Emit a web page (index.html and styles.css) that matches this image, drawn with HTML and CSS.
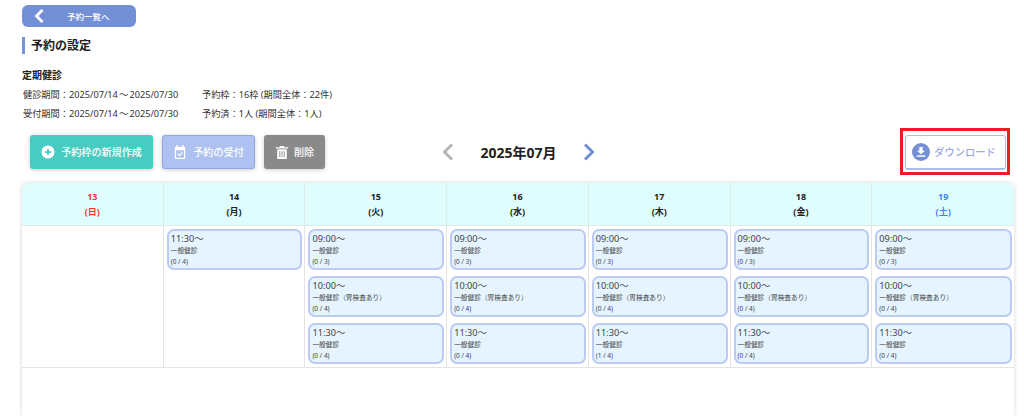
FILE: index.html
```html
<!DOCTYPE html>
<html lang="ja">
<head>
<meta charset="utf-8">
<title>予約の設定</title>
<link rel="stylesheet" href="styles.css">
</head>
<body>
<main class="page">
  <a class="back"><svg class="back-icon" viewBox="0 0 12 16"><path d="M9.500 2 3.500 8l6 6" fill="none" stroke="#fff" stroke-width="2.800"/></svg><span>予約一覧へ</span></a>
  <h1 class="title">予約の設定</h1>
  <section class="info">
    <h2 class="info-name">定期健診</h2>
    <div class="info-row"><span class="info-a">健診期間：2025/07/14 ～ 2025/07/30</span><span>予約枠：16枠 (期間全体：22件)</span></div>
    <div class="info-row"><span class="info-a">受付期間：2025/07/14 ～ 2025/07/30</span><span>予約済：1人 (期間全体：1人)</span></div>
  </section>
  <div class="toolbar">
    <div class="actions">
      <button class="btn btn-new"><svg viewBox="0 0 16 16" class="ico"><circle cx="8" cy="8" r="7.500" fill="#fff"/><path d="M8 4.500v7M4.500 8h7" stroke="#48cbc1" stroke-width="2"/></svg>予約枠の新規作成</button>
      <button class="btn btn-accept"><svg viewBox="0 0 16 16" class="ico"><path d="M4.500 0v3M11.500 0v3" stroke="#fff" stroke-width="1.600"/><rect x="2" y="2" width="12" height="14" rx="1.500" fill="#fff"/><rect x="3.500" y="6" width="9" height="8.500" fill="#aec1f0"/><path d="m5.500 10 2 2 3.500-3.500" fill="none" stroke="#fff" stroke-width="1.300"/></svg>予約の受付</button>
      <button class="btn btn-del"><svg viewBox="0 0 16 16" class="ico"><path d="M1 2.500h14V4H1zM5.500 1h5v1.500h-5z" fill="#fff"/><path d="M2.500 5h11v11h-11z" fill="#fff"/><path d="M5.500 7v7M8 7v7M10.500 7v7" stroke="#8a8a8a" stroke-width="1"/></svg>削除</button>
    </div>
    <div class="month">
      <svg class="chev" viewBox="0 0 12 18"><path d="M10 1.500 2.500 9l7.500 7.500" fill="none" stroke="#b5b5b5" stroke-width="3"/></svg>
      <span class="month-label">2025年07月</span>
      <svg class="chev" viewBox="0 0 12 18"><path d="M2 1.500 9.500 9 2 16.500" fill="none" stroke="#7390d6" stroke-width="3"/></svg>
    </div>
    <div class="dl-wrap">
      <button class="dl"><svg viewBox="0 0 18 18" class="dl-ico"><circle cx="9" cy="9" r="9" fill="#7390d6"/><path d="M7.300 4h3.400v3.800h2.300L9 11.200 5 7.800h2.300z" fill="#fff"/><path d="M4.800 12.300h8.400v1.500H4.800z" fill="#fff"/></svg>ダウンロード</button>
      <div class="highlight"></div>
    </div>
  </div>
  <section class="calendar">
    <div class="cal-grid">
      <div class="head sun">13<br>(日)</div>
      <div class="head">14<br>(月)</div>
      <div class="head">15<br>(火)</div>
      <div class="head">16<br>(水)</div>
      <div class="head">17<br>(木)</div>
      <div class="head">18<br>(金)</div>
      <div class="head sat">19<br>(土)</div>

      <div class="day"></div>
      <div class="day">
        <div class="slot"><b>11:30～</b><span>一般健診</span><i>(0 / 4)</i></div>
      </div>
      <div class="day">
        <div class="slot"><b>09:00～</b><span>一般健診</span><i>(0 / 3)</i></div>
        <div class="slot"><b>10:00～</b><span>一般健診（胃検査あり）</span><i>(0 / 4)</i></div>
        <div class="slot"><b>11:30～</b><span>一般健診</span><i>(0 / 4)</i></div>
      </div>
      <div class="day">
        <div class="slot"><b>09:00～</b><span>一般健診</span><i>(0 / 3)</i></div>
        <div class="slot"><b>10:00～</b><span>一般健診（胃検査あり）</span><i>(0 / 4)</i></div>
        <div class="slot"><b>11:30～</b><span>一般健診</span><i>(0 / 4)</i></div>
      </div>
      <div class="day">
        <div class="slot"><b>09:00～</b><span>一般健診</span><i>(0 / 3)</i></div>
        <div class="slot"><b>10:00～</b><span>一般健診（胃検査あり）</span><i>(0 / 4)</i></div>
        <div class="slot"><b>11:30～</b><span>一般健診</span><i>(1 / 4)</i></div>
      </div>
      <div class="day">
        <div class="slot"><b>09:00～</b><span>一般健診</span><i>(0 / 3)</i></div>
        <div class="slot"><b>10:00～</b><span>一般健診（胃検査あり）</span><i>(0 / 4)</i></div>
        <div class="slot"><b>11:30～</b><span>一般健診</span><i>(0 / 4)</i></div>
      </div>
      <div class="day">
        <div class="slot"><b>09:00～</b><span>一般健診</span><i>(0 / 3)</i></div>
        <div class="slot"><b>10:00～</b><span>一般健診（胃検査あり）</span><i>(0 / 4)</i></div>
        <div class="slot"><b>11:30～</b><span>一般健診</span><i>(0 / 4)</i></div>
      </div>
    </div>
  </section>
</main>
</body>
</html>
```
FILE: styles.css
```css
* { box-sizing: border-box; }
html, body { margin: 0; height: 416px; overflow: hidden; background: #fff; }
body { font-family: "Noto Sans", "Noto Sans CJK JP", sans-serif; color: #222; }
.page { display: flex; flex-direction: column; align-items: flex-start; padding: 5px 10px 0 22px; height: 416px; }

.back { width: 114px; height: 22px; border-radius: 6px; background: #7390d6; color: #fff; display: flex; align-items: center; font-size: 8.500px; font-weight: 500; padding-left: 11px; }
.back-icon { width: 12px; height: 16px; }
.back span { margin-left: 22px; }

.title { margin: 10px 0 0; height: 17px; border-left: 3px solid #7a90d8; padding-left: 6px; font-size: 12px; line-height: 17px; font-weight: 700; color: #222; }

.info { margin-top: 14px; }
.info-name { margin: 0 0 7px; font-size: 10px; line-height: 14px; font-weight: 700; }
.info-row { display: flex; font-size: 9.200px; line-height: 12px; height: 19px; padding-left: 1px; color: #333; }
.info-a { width: 179px; word-spacing: -1.200px; }

.toolbar { display: flex; align-items: flex-start; width: 992px; margin-top: 8px; padding-left: 8px; }
.actions { display: flex; gap: 9px; width: 412px; }
.btn { height: 34px; border: 0; border-radius: 3px; color: #fff; font: 500 10.100px/1 "Noto Sans", "Noto Sans CJK JP", sans-serif; display: flex; align-items: center; justify-content: center; gap: 6px; padding: 0; box-shadow: 0 1px 4px rgba(0,0,0,.2); }
.ico { width: 14px; height: 14px; flex: none; }
.btn-new { width: 123px; background: #48cbc1; }
.btn-accept { width: 93px; background: #aec1f0; border: 1px solid #8ea6e4; }
.btn-del { width: 61px; background: #8a8a8a; gap: 5px; }

.month { display: flex; align-items: center; height: 34px; width: 153px; }
.chev { width: 12px; height: 18px; flex: none; }
.month-label { width: 129px; text-align: center; font-size: 14px; font-weight: 700; color: #222; }

.dl-wrap { position: relative; margin-left: auto; margin-right: 8px; }
.dl { width: 101px; height: 35px; background: #fff; border: 1px solid #a9bdee; border-bottom-width: 2px; border-radius: 3px; color: #9aa8de; font: 500 10.300px/1 "Noto Sans", "Noto Sans CJK JP", sans-serif; display: flex; align-items: center; justify-content: center; gap: 4px; padding: 0 3px 0 0; }
.dl-ico { width: 18px; height: 18px; flex: none; }
.highlight { position: absolute; left: -5px; top: -7px; width: 110px; height: 47px; border: 3px solid #ed1c24; pointer-events: none; }

.calendar { width: 992px; margin-top: 13px; flex: 1 0 auto; border-radius: 6px 6px 0 0; background: #fff; box-shadow: 0 0 4px rgba(0,0,0,.18); }
.cal-grid { display: grid; grid-template-columns: repeat(7, 1fr); grid-template-rows: 43px 141px; border-bottom: 1px solid #e4e4e4; }
.head { background: #e0fdfe; border-right: 1px solid #dcecec; border-bottom: 1px solid #dfeaea; text-align: center; font-size: 9px; line-height: 14.500px; font-weight: 700; padding-top: 7px; color: #222; }
.head:first-child { border-top-left-radius: 6px; }
.head:nth-child(7) { border-top-right-radius: 6px; border-right: 0; }
.sun { color: #f0352e; }
.sat { color: #3f86f5; }

.day { border-right: 1px solid #e4e4e4; padding: 3px 2px 0 3px; display: flex; flex-direction: column; gap: 6px; min-width: 0; }
.day:nth-child(14) { border-right: 0; }
.slot { height: 41px; border: 2px solid #bccbf3; border-radius: 7px; background: #e5f4ff; padding: 1px 2px 0; display: flex; flex-direction: column; color: #444; }
.slot b { font-weight: 400; font-size: 9.200px; line-height: 14px; }
.slot span { font-size: 6.700px; line-height: 10px; }
.slot i { font-style: normal; font-size: 6.500px; line-height: 11px; }
```
